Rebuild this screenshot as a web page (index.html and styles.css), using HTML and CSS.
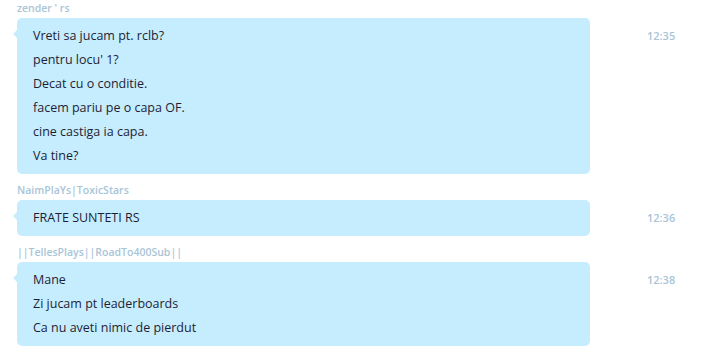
FILE: index.html
```html
<!DOCTYPE html>
<html>
<head>
<meta charset="utf-8">
<link rel="stylesheet" href="styles.css">
</head>
<body>
<div class="chat">
  <div class="msg first">
    <div class="name">zender ' rs</div>
    <div class="row">
      <div class="bubble">
        <div class="line">Vreti sa jucam pt. rclb?</div>
        <div class="line">pentru locu' 1?</div>
        <div class="line">Decat cu o conditie.</div>
        <div class="line">facem pariu pe o capa OF.</div>
        <div class="line">cine castiga ia capa.</div>
        <div class="line">Va tine?</div>
      </div>
      <div class="time">12:35</div>
    </div>
  </div>
  <div class="msg">
    <div class="name">NaimPlaYs|ToxicStars</div>
    <div class="row">
      <div class="bubble">
        <div class="line">FRATE SUNTETI RS</div>
      </div>
      <div class="time">12:36</div>
    </div>
  </div>
  <div class="msg">
    <div class="name">||TellesPlays||RoadTo400Sub||</div>
    <div class="row">
      <div class="bubble">
        <div class="line">Mane</div>
        <div class="line">Zi jucam pt leaderboards</div>
        <div class="line">Ca nu aveti nimic de pierdut</div>
      </div>
      <div class="time">12:38</div>
    </div>
  </div>
</div>
</body>
</html>
```
FILE: styles.css
```css
html, body {
  margin: 0;
  padding: 0;
  background: #ffffff;
}
body {
  font-family: "Open Sans", "Noto Sans", "Liberation Sans", sans-serif;
  width: 708px;
  height: 354px;
  overflow: hidden;
}
.chat {
  display: flex;
  flex-direction: column;
  padding-left: 17px;
}
.msg {
  display: flex;
  flex-direction: column;
  margin-top: 6px;
}
.msg.first {
  margin-top: -2px;
}
.name {
  height: 20px;
  line-height: 20px;
  font-size: 10.5px;
  font-weight: 600;
  color: #a8c5d8;
}
.row {
  display: flex;
  align-items: flex-start;
}
.bubble {
  position: relative;
  width: 573px;
  box-sizing: border-box;
  background: #c6edfd;
  border-radius: 5px;
  padding: 6px 16px;
  color: #1e1e36;
  font-size: 12.5px;
}
.bubble::before {
  content: "";
  position: absolute;
  left: -4px;
  top: 12px;
  border-top: 4px solid transparent;
  border-bottom: 4px solid transparent;
  border-right: 4px solid #c6edfd;
}
.line {
  height: 24px;
  line-height: 24px;
  white-space: nowrap;
}
.time {
  margin-left: 57px;
  height: 36px;
  line-height: 36px;
  font-size: 11px;
  font-weight: 600;
  color: #a8c5d8;
}
```
